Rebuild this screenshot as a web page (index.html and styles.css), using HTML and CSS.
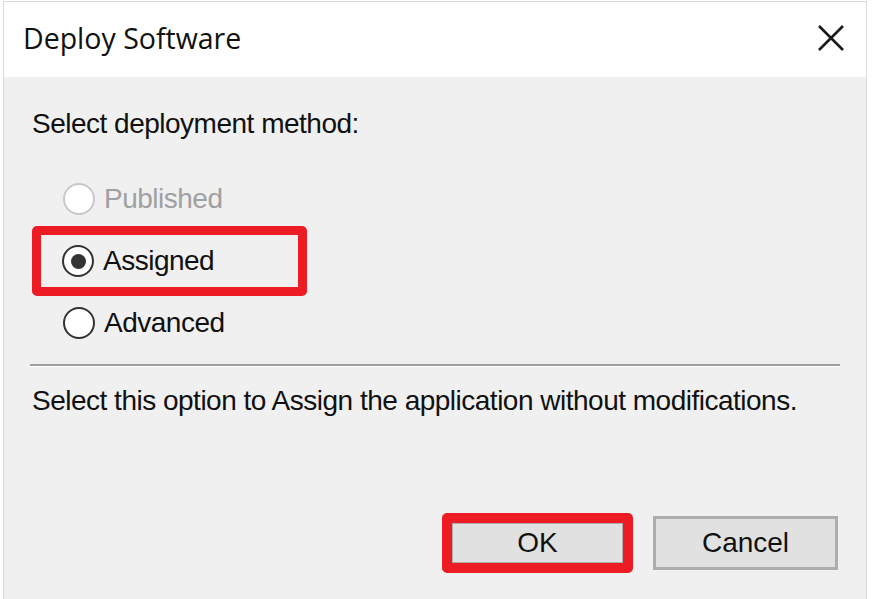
FILE: index.html
```html
<!DOCTYPE html>
<html lang="en">
<head>
  <meta charset="UTF-8" />
  <title>Deploy Software</title>
  <link rel="stylesheet" href="styles.css">
</head>
<body>
  <div class="dialog">
    <div class="titlebar">
      <span class="title">Deploy Software</span>
      <button class="close" aria-label="Close">
        <svg width="28" height="28" viewBox="0 0 28 28">
          <path d="M2 2 L26 26 M26 2 L2 26" stroke="#1a1a1a" stroke-width="2.6" fill="none" />
        </svg>
      </button>
    </div>

    <div class="content">
      <p class="label">Select deployment method:</p>

      <div class="options">
        <label class="option disabled">
          <span class="radio"></span>Published
        </label>
        <label class="option highlight">
          <span class="radio checked"></span>Assigned
        </label>
        <label class="option">
          <span class="radio"></span>Advanced
        </label>
      </div>

      <hr class="separator" />

      <p class="desc">Select this option to Assign the application without modifications.</p>

      <div class="buttons">
        <div class="highlight-btn">
          <button class="btn">OK</button>
        </div>
        <button class="btn cancel">Cancel</button>
      </div>
    </div>
  </div>
</body>
</html>
```

FILE: styles.css
```css
* {
  box-sizing: border-box;
  margin: 0;
  padding: 0;
}

body {
  background: #fff;
  font-family: 'Liberation Sans', Arial, sans-serif;
  color: #111;
  overflow: hidden;
}

.dialog {
  margin: 1px 0 0 3px;
  width: 864px;
  height: 620px;
  border: 1px solid #d9d9d9;
  border-bottom: none;
  background: #f0f0f0;
}

.titlebar {
  height: 75px;
  background: #fff;
  display: flex;
  align-items: center;
  justify-content: space-between;
  padding: 0 20px 0 19px;
}

.title {
  font-family: 'Open Sans', 'Noto Sans', sans-serif;
  font-size: 28.5px;
  color: #111;
  margin-top: -4px;
}

.close {
  background: none;
  border: none;
  width: 30px;
  height: 30px;
  display: flex;
  align-items: center;
  justify-content: center;
  margin-top: -4px;
}

.content {
  padding: 30px 26px 0 28px;
}

.label,
.desc,
.option {
  font-size: 28px;
  letter-spacing: -0.5px;
}

.label {
  line-height: 34px;
}

.options {
  margin-top: 58px;
  display: flex;
  flex-direction: column;
}

.option {
  display: flex;
  align-items: center;
  height: 61px;
  margin-left: 4px;
  padding-left: 27px;
  width: 275px;
}

.option:first-child {
  height: 34px;
  margin-top: -17px;
  margin-bottom: 10px;
}

.option.disabled {
  color: #a0a0a0;
}

.option.highlight {
  border: 9px solid #ed1c24;
  border-radius: 5px;
  padding-left: 21px;
  height: 70px;
  margin: 0 0 -4px 0;
}

.radio {
  width: 32px;
  height: 32px;
  border-radius: 50%;
  border: 2.5px solid #333;
  background: #fff;
  margin-right: 9px;
  display: flex;
  align-items: center;
  justify-content: center;
  flex-shrink: 0;
}

.option.disabled .radio {
  border-color: #c8c8c8;
}

.radio.checked::after {
  content: "";
  width: 15px;
  height: 15px;
  border-radius: 50%;
  background: #333;
}

.separator {
  border: none;
  border-top: 2px solid #a0a0a0;
  border-bottom: 1px solid #fff;
  margin: 11px 0 0 -2px;
  width: 810px;
}

.desc {
  margin-top: 17px;
  line-height: 34px;
}

.buttons {
  display: flex;
  justify-content: flex-end;
  align-items: center;
  gap: 20px;
  margin-top: 95px;
  padding-right: 2px;
}

.highlight-btn {
  border: 10px solid #ed1c24;
  border-radius: 5px;
  width: 191px;
  height: 60px;
}

.btn {
  font-family: 'Liberation Sans', Arial, sans-serif;
  font-size: 28px;
  color: #111;
  background: #e1e1e1;
  border: 1px solid #adadad;
  width: 100%;
  height: 100%;
}

.btn.cancel {
  width: 185px;
  height: 54px;
  border: 3px solid #adadad;
}
```
